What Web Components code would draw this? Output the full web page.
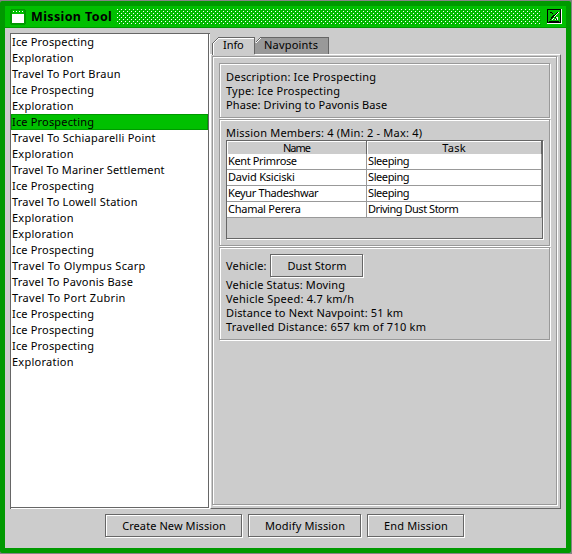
<!DOCTYPE html>
<html lang="en">
<head>
<meta charset="utf-8">
<title>Mission Tool</title>
<style>
html,body{margin:0;height:554px;overflow:hidden;background:#858585}
body{font:11px "Noto Sans","Open Sans",sans-serif;color:#000}
</style>
</head>
<body>
<mission-window></mission-window>
<script>
const define = (name, html, setup) => customElements.define(name, class extends HTMLElement {
  connectedCallback() {
    if (!this.shadowRoot) {
      this.attachShadow({ mode: 'open' }).innerHTML = html;
      if (setup) setup(this, this.shadowRoot);
    }
  }
});

/* A single line of text, tracked to the width given in "w". */
define('ui-text', `<style>
:host{display:block;white-space:pre;line-height:var(--lh,14px);height:var(--lh,14px)}
span{display:inline-block;line-height:inherit}
</style><span></span>`, (el, root) => {
  const span = root.querySelector('span');
  span.textContent = el.getAttribute('t');
  const w = parseFloat(el.getAttribute('w'));
  if (w) {
    const natural = span.getBoundingClientRect().width;
    span.style.letterSpacing = ((w + 0.2 - natural) / span.textContent.length) + 'px';
  }
});

/* Flush 3D button: dark outline with a white outline shifted by one pixel. */
define('ui-button', `<style>
:host{display:block;box-sizing:border-box;height:24px;position:relative;padding-top:5px}
:host::before,:host::after{content:"";position:absolute;box-sizing:border-box;border:1px solid #fff;inset:1px 0 0 1px}
:host::after{border-color:#666;inset:0 1px 1px 0}
div{display:flex;justify-content:center}
</style><div><slot></slot></div>`);

/* Etched group box. */
define('ui-group', `<style>
:host{display:block;box-sizing:border-box;position:relative;padding:7px}
:host::before,:host::after{content:"";position:absolute;box-sizing:border-box;border:1px solid #fff;inset:1px 0 0 1px;pointer-events:none}
:host::after{border-color:#999;inset:0 1px 1px 0}
</style><slot></slot>`);

define('ui-tab', `<style>
:host{display:block;position:relative;height:17px;box-sizing:border-box;padding:1px 0 0 11px}
svg{position:absolute;left:0;top:0}
ui-text{position:relative}
</style><svg height="18" shape-rendering="crispEdges" fill="none"></svg><ui-text></ui-text>`, (el, root) => {
  const w = +el.getAttribute('width'), sel = el.hasAttribute('selected');
  el.style.width = w + 'px';
  const svg = root.querySelector('svg');
  svg.setAttribute('width', w);
  svg.innerHTML = `<path fill="${sel ? '#ccc' : '#999'}" d="M0 18V6L6 0H${w}V${sel ? 18 : 17}H0z"/>
    ${sel ? '' : '<path fill="#ccc" d="M0 0h6L0 6z"/>'}
    <path stroke="#fff" d="${sel ? 'M1.5 18V6.5L6.5 1.5H' + (w - 1) : 'M.5 6.5L5.5 1.5'}"/>
    <path stroke="#666" d="${sel ? 'M.5 18V6.5L6.5 .5' : 'M.5 5.5L5.5 .5'}H${w - .5}V17"/>
    ${sel ? '' : '<path stroke="#fff" d="M0 17.5H' + w + '"/>'}`;
  const old = root.querySelector('ui-text'), t = document.createElement('ui-text');
  t.setAttribute('t', el.getAttribute('t')); t.setAttribute('w', el.getAttribute('w'));
  old.replaceWith(t);
});

define('title-bar', `<style>
:host{display:flex;box-sizing:border-box;height:22px;background:#00c000;border-bottom:1px solid #009900;padding:3px 4px 0 5px;align-items:flex-start}
ui-text{--lh:15px;font-size:12.5px;font-weight:700;width:86px;margin-left:5px}
svg{display:block;flex:none}
.bumps{margin-right:6px}
</style>
<svg width="16" height="16" shape-rendering="crispEdges"><path fill="#009900" d="M1 0h14v1h1v14h-1v1H1v-1H0V1h1z"/><path fill="#00c000" d="M2 1h12v4H2z"/><path fill="#fff" d="M2 5h12v9H2zM3 2h1v1H3zM6 2h1v1H6zM9 2h1v1H9zM12 2h1v1h-1z"/></svg>
<ui-text t="Mission Tool" w="81"></ui-text>
<svg class="bumps" width="424" height="16" shape-rendering="crispEdges"><defs><pattern id="p" width="4" height="4" patternUnits="userSpaceOnUse"><path fill="#fff" d="M0 0h1v1H0zM2 2h1v1H2z"/><path fill="#009900" d="M1 1h1v1H1zM3 3h1v1H3z"/></pattern></defs><rect width="424" height="16" fill="url(#p)"/></svg>
<svg width="15" height="15" shape-rendering="crispEdges"><path fill="#fff" d="M1 1h14v14H1z"/><path fill="#000" d="M0 0h14v14H0z"/><path fill="#00c000" d="M1 1h12v12H1z"/><path fill="#fff" d="M14 0h1v1h-1zM0 14h1v1H0z"/>
<path fill="#000" d="M3 3h2v1H3zM5 4h1v1H5zM10 3h1v1h-1zM9 4h1v1H9zM8 5h1v1H8zM7 6h1v1H7zM6 6h1v1H6zM5 7h2v1H5zM4 8h2v1H4zM4 9h1v1H4zM3 10h1v1H3zM8 8h1v1H8zM9 10h1v1H9zM2 12h10v1H2z"/>
<path fill="#fff" d="M11 3h1v1h-1zM10 4h1v1h-1zM9 5h1v1H9zM8 6h1v1H8zM7 7h1v1H7zM6 9h1v1H6zM5 10h1v1H5zM9 8h2v3h-1V9H9zM8 10h1v1H8z"/></svg>`);

define('mission-list', `<style>
:host{display:block;box-sizing:border-box;width:200px;height:476px;background:#fff;border:1px solid #666;border-right:0;border-bottom:0;position:relative}
:host::after{content:"";position:absolute;inset:-1px 1px 1px -1px;border:1px solid #666;pointer-events:none}
.row{box-sizing:border-box;width:197px;height:16px;padding:0 1px}
.sel{background:#00c000;box-shadow:inset 0 0 0 1px #009900}
ui-text{--lh:16px}
</style><div id="rows"></div>`, (el, root) => {
  const widths = { 'Ice Prospecting': 82, 'Exploration': 61.5, 'Travel To Port Braun': 108.5, 'Travel To Schiaparelli Point': 143.5,
    'Travel To Mariner Settlement': 152.5, 'Travel To Lowell Station': 125.5, 'Travel To Olympus Scarp': 133.5,
    'Travel To Pavonis Base': 121, 'Travel To Port Zubrin': 113.5 };
  const I = 'Ice Prospecting', E = 'Exploration', T = s => 'Travel To ' + s;
  root.querySelector('#rows').innerHTML = [I, E, T('Port Braun'), I, E, I, T('Schiaparelli Point'), E, T('Mariner Settlement'), I,
    T('Lowell Station'), E, E, I, T('Olympus Scarp'), T('Pavonis Base'), T('Port Zubrin'), I, I, I, E]
    .map((t, i) => `<div class="row ${i === 5 ? 'sel' : ''}"><ui-text t="${t}" w="${widths[t]}"></ui-text></div>`).join('');
});

define('member-table', `<style>
:host{display:block;box-sizing:border-box;width:318px;height:100px;position:relative;border:1px solid #666;border-right-color:#fff;border-bottom-color:#fff}
:host::after{content:"";position:absolute;inset:-1px 0 0 -1px;border:1px solid #666;pointer-events:none}
.r{display:grid;grid-template-columns:140px 175px;height:16px;width:315px}
.r>*{box-sizing:border-box;background:#fff;border:solid #999;border-width:0 1px 1px 0;padding-left:1px;--lh:14px}
.h{height:13px}
.h>div{display:flex;justify-content:center;background:#ccc;border-color:#666;box-shadow:inset 1px 1px #fff;padding:0;--lh:13px}
</style>
<div class="r h"><div><ui-text t="Name" w="27"></ui-text></div><div><ui-text t="Task" w="23.5"></ui-text></div></div>
<div class="r"><div><ui-text t="Kent Primrose" w="68.5"></ui-text></div><div><ui-text t="Sleeping" w="41"></ui-text></div></div>
<div class="r"><div><ui-text t="David Ksiciski" w="66.5"></ui-text></div><div><ui-text t="Sleeping" w="41"></ui-text></div></div>
<div class="r"><div><ui-text t="Keyur Thadeshwar" w="90"></ui-text></div><div><ui-text t="Sleeping" w="41"></ui-text></div></div>
<div class="r"><div><ui-text t="Chamal Perera" w="72.5"></ui-text></div><div><ui-text t="Driving Dust Storm" w="90"></ui-text></div></div>`);

define('mission-details', `<style>
:host{display:block;width:351px;padding-top:4px}
.tabs{display:flex;padding-left:2px}
.pane{box-sizing:border-box;width:351px;height:455px;border:1px solid;border-color:#fff #666 #666 #fff;padding:1px}
.outer{width:346px;height:450px}
.veh{display:flex;height:24px}
.veh>ui-text{--lh:24px;width:44px}
.veh ui-button{width:94px}
</style>
<div class="tabs"><ui-tab selected width="43" t="Info" w="20.5"></ui-tab><ui-tab width="74" t="Navpoints" w="54" style="padding-left:9px"></ui-tab></div>
<div class="pane"><ui-group class="outer">
<ui-group><ui-text t="Description: Ice Prospecting" w="150"></ui-text><ui-text t="Type: Ice Prospecting" w="114"></ui-text><ui-text t="Phase: Driving to Pavonis Base" w="161"></ui-text></ui-group>
<ui-group><ui-text t="Mission Members: 4 (Min: 2 - Max: 4)" w="196"></ui-text><member-table></member-table></ui-group>
<ui-group><div class="veh"><ui-text t="Vehicle:" w="40.5"></ui-text><ui-button><ui-text t="Dust Storm" w="59"></ui-text></ui-button></div>
<ui-text t="Vehicle Status: Moving" w="119"></ui-text><ui-text t="Vehicle Speed: 4.7 km/h" w="128"></ui-text><ui-text t="Distance to Next Navpoint: 51 km" w="177"></ui-text><ui-text t="Travelled Distance: 657 km of 710 km" w="200"></ui-text></ui-group>
</ui-group></div>`);

define('mission-window', `<style>
:host{display:block;padding-top:1px}
.frame{box-sizing:border-box;width:571px;height:552px;border:5px solid #009900;border-radius:2px;background:#ccc}
.main{display:flex;padding:5px 5px 0}
.buttons{display:flex;gap:5px;padding:5px 0 0 100px}
</style>
<div class="frame"><title-bar></title-bar>
<div class="main"><mission-list></mission-list><mission-details></mission-details></div>
<div class="buttons"><ui-button style="width:138px"><ui-text t="Create New Mission" w="103.5"></ui-text></ui-button><ui-button style="width:114px"><ui-text t="Modify Mission" w="80"></ui-text></ui-button><ui-button style="width:98px"><ui-text t="End Mission" w="64"></ui-text></ui-button></div>
</div>`);
</script>
</body>
</html>
